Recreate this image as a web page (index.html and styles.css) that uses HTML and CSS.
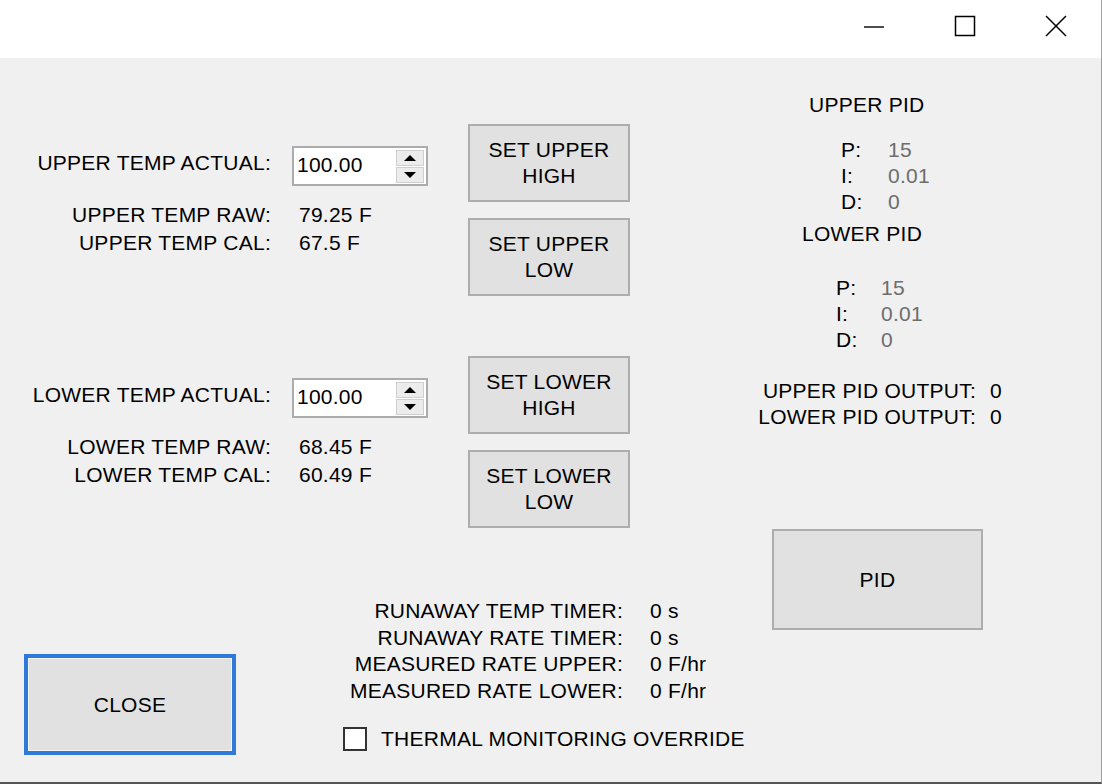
FILE: index.html
```html
<!DOCTYPE html>
<html>
<head>
<meta charset="utf-8">
<title>Temperature Calibration</title>
<link rel="stylesheet" href="styles.css">
</head>
<body>
<div class="window">
  <div class="titlebar">
    <div class="cap-btn">
      <svg width="24" height="24" viewBox="0 0 24 24"><line x1="2" y1="13" x2="22" y2="13" stroke="#000" stroke-width="1.4"/></svg>
    </div>
    <div class="cap-btn">
      <svg width="24" height="24" viewBox="0 0 24 24"><rect x="2.5" y="2.5" width="19" height="19" fill="none" stroke="#000" stroke-width="1.5"/></svg>
    </div>
    <div class="cap-btn">
      <svg width="24" height="24" viewBox="0 0 24 24"><path d="M2 2 L22 22 M22 2 L2 22" stroke="#000" stroke-width="1.5" fill="none"/></svg>
    </div>
  </div>

  <div class="client">
    <div class="left">
      <div class="group">
        <div class="actual-row">
          <div class="actual-label">UPPER TEMP ACTUAL:</div>
          <div class="spinner">
            <div class="spin-value">100.00</div>
            <div class="spin-buttons">
              <div class="spin-btn"><span class="tri-up"></span></div>
              <div class="spin-btn"><span class="tri-down"></span></div>
            </div>
          </div>
        </div>
        <div class="readings">
          <div class="r-label">UPPER TEMP RAW:</div><div>79.25 F</div>
          <div class="r-label">UPPER TEMP CAL:</div><div>67.5 F</div>
        </div>
      </div>
      <div class="group group-lower">
        <div class="actual-row">
          <div class="actual-label">LOWER TEMP ACTUAL:</div>
          <div class="spinner">
            <div class="spin-value">100.00</div>
            <div class="spin-buttons">
              <div class="spin-btn"><span class="tri-up"></span></div>
              <div class="spin-btn"><span class="tri-down"></span></div>
            </div>
          </div>
        </div>
        <div class="readings">
          <div class="r-label">LOWER TEMP RAW:</div><div>68.45 F</div>
          <div class="r-label">LOWER TEMP CAL:</div><div>60.49 F</div>
        </div>
      </div>
    </div>

    <div class="btn-col">
      <button class="btn set-btn">SET UPPER<br>HIGH</button>
      <button class="btn set-btn gap-small">SET UPPER<br>LOW</button>
      <button class="btn set-btn gap-large">SET LOWER<br>HIGH</button>
      <button class="btn set-btn gap-small">SET LOWER<br>LOW</button>
    </div>

    <div class="right">
      <div class="pid-head upper-head">UPPER PID</div>
      <div class="pid-rows upper-rows">
        <div>P:</div><div class="dim">15</div>
        <div>I:</div><div class="dim">0.01</div>
        <div>D:</div><div class="dim">0</div>
      </div>
      <div class="pid-head lower-head">LOWER PID</div>
      <div class="pid-rows lower-rows">
        <div>P:</div><div class="dim">15</div>
        <div>I:</div><div class="dim">0.01</div>
        <div>D:</div><div class="dim">0</div>
      </div>
      <div class="outputs">
        <div class="o-label">UPPER PID OUTPUT:</div><div>0</div>
        <div class="o-label">LOWER PID OUTPUT:</div><div>0</div>
      </div>
    </div>

    <div class="bottom">
      <button class="btn close-btn">CLOSE</button>
      <div class="timers-block">
        <div class="timers">
          <div class="t-label">RUNAWAY TEMP TIMER:</div><div>0 s</div>
          <div class="t-label">RUNAWAY RATE TIMER:</div><div>0 s</div>
          <div class="t-label">MEASURED RATE UPPER:</div><div>0 F/hr</div>
          <div class="t-label">MEASURED RATE LOWER:</div><div>0 F/hr</div>
        </div>
        <div class="check-row">
          <span class="checkbox"></span>
          <span>THERMAL MONITORING OVERRIDE</span>
        </div>
      </div>
    </div>

    <div class="pid-cell">
      <button class="btn pid-btn">PID</button>
    </div>
  </div>
</div>
</body>
</html>
```

FILE: styles.css
```css
html, body {
  margin: 0;
  padding: 0;
  background: #ffffff;
}

.window {
  width: 1102px;
  height: 784px;
  box-sizing: border-box;
  display: flex;
  flex-direction: column;
  background: #f0f0f0;
  border-right: 1px solid #a0a0a0;
  border-bottom: 2px solid #555555;
  font-family: "Liberation Sans", Arial, sans-serif;
  font-size: 21px;
  letter-spacing: 0.25px;
  color: #000000;
  overflow: hidden;
}

.titlebar {
  flex: none;
  height: 58px;
  box-sizing: border-box;
  padding-bottom: 6px;
  background: #ffffff;
  display: flex;
  justify-content: flex-end;
}

.cap-btn {
  width: 91px;
  display: flex;
  align-items: center;
  justify-content: center;
}

.cap-btn svg {
  display: block;
}

.client {
  flex: 1;
  display: grid;
  grid-template-columns: 468px 162px 1fr;
  grid-template-rows: 470px 1fr;
}

/* ---------- left column ---------- */
.left {
  padding-top: 88px;
}

.group-lower {
  margin-top: 121px;
}

.actual-row {
  display: flex;
  align-items: center;
  height: 40px;
}

.actual-label {
  width: 271px;
  text-align: right;
  white-space: nowrap;
  margin-top: -6px;
}

.spinner {
  margin-left: 21px;
  width: 136px;
  height: 40px;
  box-sizing: border-box;
  border: 2px solid #acacac;
  background: #ffffff;
  display: flex;
  align-items: center;
  justify-content: space-between;
  padding: 2px 2px 2px 3px;
}

.spin-value {
  margin-top: -3px;
}

.spin-buttons {
  width: 28px;
  height: 33px;
  display: flex;
  flex-direction: column;
  gap: 1px;
}

.spin-btn {
  flex: 1;
  box-sizing: border-box;
  border: 1px solid #cfcfcf;
  background: #ececec;
  display: flex;
  align-items: center;
  justify-content: center;
}

.tri-up {
  width: 0;
  height: 0;
  border-left: 6px solid transparent;
  border-right: 6px solid transparent;
  border-bottom: 6px solid #000;
}

.tri-down {
  width: 0;
  height: 0;
  border-left: 6px solid transparent;
  border-right: 6px solid transparent;
  border-top: 6px solid #000;
}

.readings {
  margin-top: 15px;
  display: grid;
  grid-template-columns: 271px auto;
  column-gap: 28px;
  line-height: 28px;
  white-space: nowrap;
}

.r-label {
  text-align: right;
}

/* ---------- buttons ---------- */
.btn {
  box-sizing: border-box;
  border: 2px solid #adadad;
  background: #e1e1e1;
  font-family: inherit;
  font-size: 21px;
  letter-spacing: 0.25px;
  color: #000;
  line-height: 26px;
  padding: 0;
  margin: 0;
  display: flex;
  align-items: center;
  justify-content: center;
  text-align: center;
  flex: none;
}

.btn-col {
  padding-top: 66px;
  display: flex;
  flex-direction: column;
}

.set-btn {
  width: 162px;
  height: 78px;
}

.gap-small {
  margin-top: 16px;
}

.gap-large {
  margin-top: 60px;
}

/* ---------- right column ---------- */
.right {
  padding-top: 34px;
  line-height: 26px;
  white-space: nowrap;
}

.pid-head.upper-head {
  padding-left: 179px;
}

.pid-head.lower-head {
  padding-left: 172px;
  margin-top: 6px;
}

.pid-rows {
  display: grid;
  grid-template-columns: 47px auto;
}

.upper-rows {
  margin-top: 19px;
  padding-left: 211px;
}

.lower-rows {
  margin-top: 28px;
  padding-left: 206px;
  grid-template-columns: 45px auto;
}

.dim {
  color: #6d6d6d;
}

.outputs {
  margin-top: 25px;
  padding-left: 124px;
  display: grid;
  grid-template-columns: 222px auto;
  column-gap: 14px;
}

.o-label {
  text-align: right;
}

/* ---------- bottom ---------- */
.bottom {
  grid-column: 1 / 3;
  display: flex;
  align-items: flex-start;
}

.close-btn {
  margin-left: 24px;
  margin-top: 126px;
  width: 212px;
  height: 101px;
  border: 4px solid #2f7ad8;
  box-shadow: inset 0 0 0 1px #f4f4f4;
}

.timers-block {
  flex: none;
  margin-left: 111px;
  margin-top: 70px;
}

.timers {
  display: grid;
  grid-template-columns: 276px auto;
  column-gap: 27px;
  line-height: 26.7px;
  white-space: nowrap;
}

.t-label {
  text-align: right;
}

.check-row {
  margin-top: 21px;
  margin-left: -4px;
  display: flex;
  align-items: center;
  gap: 14px;
  line-height: 26px;
  white-space: nowrap;
}

.checkbox {
  width: 24px;
  height: 24px;
  box-sizing: border-box;
  border: 2px solid #333333;
  background: #ffffff;
  flex: none;
}

.pid-cell {
  padding-top: 1px;
  padding-left: 142px;
}

.pid-btn {
  width: 211px;
  height: 101px;
}
```
